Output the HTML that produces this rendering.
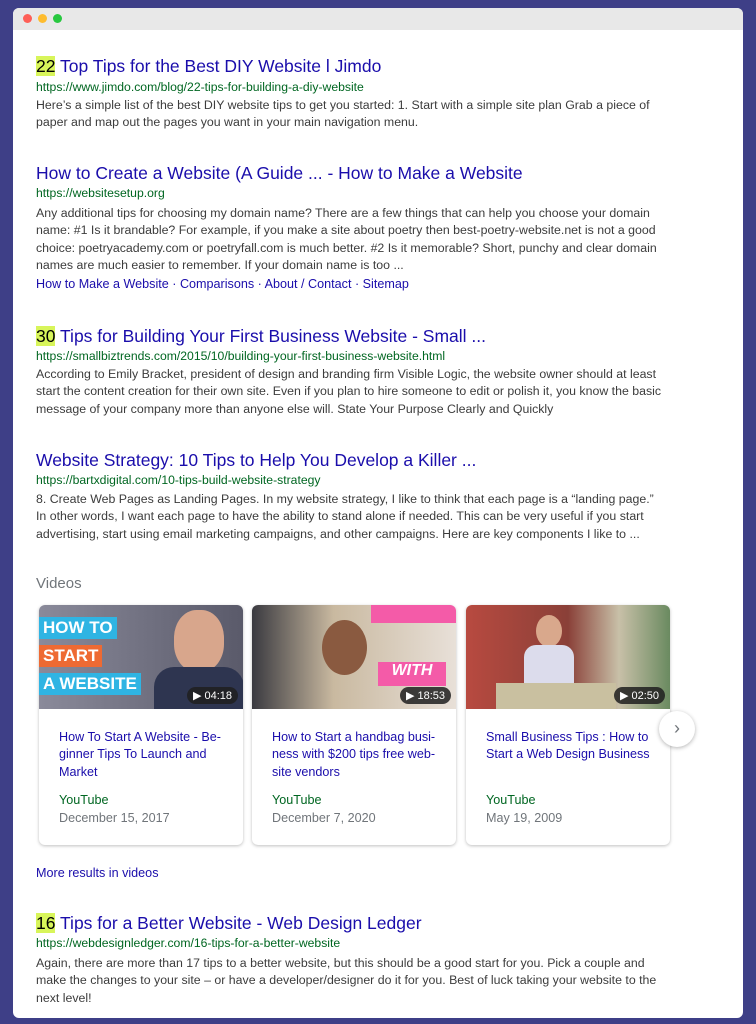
<!DOCTYPE html>
<html><head><meta charset="utf-8"><style>
*{margin:0;padding:0;box-sizing:border-box}
body{width:756px;height:1024px;background:#3e3f87;font-family:"Liberation Sans",Arial,sans-serif;position:relative;overflow:hidden}
.win{position:absolute;left:13px;top:8px;width:730px;height:1010px;background:#fff;border-radius:6px;overflow:hidden}
.bar{height:22px;background:#e8e8e8;position:relative}
.dot{position:absolute;top:6px;width:9px;height:9px;border-radius:50%}
.a{position:absolute;left:23px;white-space:nowrap}
.t{font-size:17.5px;color:#1a0dab}
.t b{font-weight:normal;color:#000;background:#d8f55a}
.u{font-size:12.2px;color:#006621}
.s{font-size:12.35px;color:#3c3c3c;line-height:17.3px}
.l{font-size:12.6px;color:#1a0dab}
.card{position:absolute;top:597px;width:204px;height:240px;border-radius:6px;box-shadow:0 1px 3px rgba(0,0,0,.25);overflow:hidden;background:#fff}
.th{height:104px;position:relative}
.dur{position:absolute;right:5px;bottom:5px;background:rgba(30,30,30,.85);color:#fff;font-size:11px;padding:2px 6px;border-radius:9px}
.ct{position:absolute;left:20px;top:124px;font-size:12.6px;line-height:17.3px;color:#1a0dab;width:175px}
.yt{position:absolute;left:20px;top:188px;font-size:12.6px;color:#006621}
.dt{position:absolute;left:20px;top:206px;font-size:12.6px;color:#70757a}
</style></head><body>
<div class="win">
<div class="bar"><div class="dot" style="left:10px;background:#fe5f57"></div><div class="dot" style="left:25px;background:#febc2e"></div><div class="dot" style="left:40px;background:#28c840"></div></div>

<div class="a t" style="top:48px"><b>22</b> Top Tips for the Best DIY Website l Jimdo</div>
<div class="a u" style="top:72px">https://www.jimdo.com/blog/22-tips-for-building-a-diy-website</div>
<div class="a s" style="top:89px">Here’s a simple list of the best DIY website tips to get you started: 1. Start with a simple site plan Grab a piece of<br>paper and map out the pages you want in your main navigation menu.</div>

<div class="a t" style="top:155px">How to Create a Website (A Guide ... - How to Make a Website</div>
<div class="a u" style="top:178px">https://websitesetup.org</div>
<div class="a s" style="top:197px">Any additional tips for choosing my domain name? There are a few things that can help you choose your domain<br>name: #1 Is it brandable? For example, if you make a site about poetry then best-poetry-website.net is not a good<br>choice: poetryacademy.com or poetryfall.com is much better. #2 Is it memorable? Short, punchy and clear domain<br>names are much easier to remember. If your domain name is too ...</div>
<div class="a l" style="top:269px">How to Make a Website · Comparisons · About / Contact · Sitemap</div>

<div class="a t" style="top:318px"><b>30</b> Tips for Building Your First Business Website - Small ...</div>
<div class="a u" style="top:341px">https://smallbiztrends.com/2015/10/building-your-first-business-website.html</div>
<div class="a s" style="top:358px">According to Emily Bracket, president of design and branding firm Visible Logic, the website owner should at least<br>start the content creation for their own site. Even if you plan to hire someone to edit or polish it, you know the basic<br>message of your company more than anyone else will. State Your Purpose Clearly and Quickly</div>

<div class="a t" style="top:442px">Website Strategy: 10 Tips to Help You Develop a Killer ...</div>
<div class="a u" style="top:465px">https://bartxdigital.com/10-tips-build-website-strategy</div>
<div class="a s" style="top:483px">8. Create Web Pages as Landing Pages. In my website strategy, I like to think that each page is a “landing page.”<br>In other words, I want each page to have the ability to stand alone if needed. This can be very useful if you start<br>advertising, start using email marketing campaigns, and other campaigns. Here are key components I like to ...</div>

<div class="a" style="top:567px;font-size:15px;color:#70757a">Videos</div>

<div class="card" style="left:26px"><div class="th" style="background:linear-gradient(90deg,#8a8a9a,#5a5a6a)">
<div style="position:absolute;left:0;top:12px;background:#2fb4e3;color:#fff;font-weight:bold;font-size:17px;padding:1px 4px">HOW TO</div>
<div style="position:absolute;left:0;top:40px;background:#ee6a33;color:#fff;font-weight:bold;font-size:17px;padding:1px 4px">START</div>
<div style="position:absolute;left:0;top:68px;background:#2fb4e3;color:#fff;font-weight:bold;font-size:17px;padding:1px 4px">A WEBSITE</div>
<div style="position:absolute;left:135px;top:5px;width:50px;height:62px;border-radius:45%;background:#d8a68c"></div>
<div style="position:absolute;left:115px;top:62px;width:90px;height:42px;background:#2e3550;border-radius:20px 20px 0 0"></div>
<div class="dur">▶ 04:18</div></div>
<div class="ct">How To Start A Website - Be-ginner Tips To Launch and Market</div><div class="yt">YouTube</div><div class="dt">December 15, 2017</div></div>

<div class="card" style="left:239px"><div class="th" style="background:linear-gradient(90deg,#3a3a40,#c9b9a0 40%,#e8e0d8)">
<div style="position:absolute;right:0;top:0;width:85px;height:18px;background:#f45ba8"></div>
<div style="position:absolute;right:10px;top:57px;width:68px;height:24px;background:#f45ba8;color:#fff;font-weight:bold;font-style:italic;font-size:16px;text-align:center">WITH</div>
<div style="position:absolute;left:70px;top:15px;width:45px;height:55px;border-radius:50%;background:#8a5a40"></div>
<div class="dur">▶ 18:53</div></div>
<div class="ct">How to Start a handbag busi-ness with $200 tips free web-site vendors</div><div class="yt">YouTube</div><div class="dt">December 7, 2020</div></div>

<div class="card" style="left:453px"><div class="th" style="background:linear-gradient(90deg,#b84a40,#8a4038 50%,#c8c0a8 75%,#6a8a60)">
<div style="position:absolute;left:70px;top:10px;width:26px;height:32px;border-radius:50%;background:#d9a88c"></div>
<div style="position:absolute;left:58px;top:40px;width:50px;height:50px;background:#dcdcec;border-radius:12px 12px 0 0"></div>
<div style="position:absolute;left:30px;top:78px;width:120px;height:26px;background:#c9c0a0"></div>
<div class="dur">▶ 02:50</div></div>
<div class="ct">Small Business Tips : How to Start a Web Design Business</div><div class="yt">YouTube</div><div class="dt">May 19, 2009</div></div>

<div style="position:absolute;left:646px;top:703px;width:36px;height:36px;border-radius:50%;background:#fff;box-shadow:0 1px 4px rgba(0,0,0,.3);color:#70757a;font-size:18px;text-align:center;line-height:34px">›</div>

<div class="a l" style="top:858px">More results in videos</div>

<div class="a t" style="top:905px"><b>16</b> Tips for a Better Website - Web Design Ledger</div>
<div class="a u" style="top:928px">https://webdesignledger.com/16-tips-for-a-better-website</div>
<div class="a s" style="top:947px">Again, there are more than 17 tips to a better website, but this should be a good start for you. Pick a couple and<br>make the changes to your site – or have a developer/designer do it for you. Best of luck taking your website to the<br>next level!</div>
</div>
</body></html>
